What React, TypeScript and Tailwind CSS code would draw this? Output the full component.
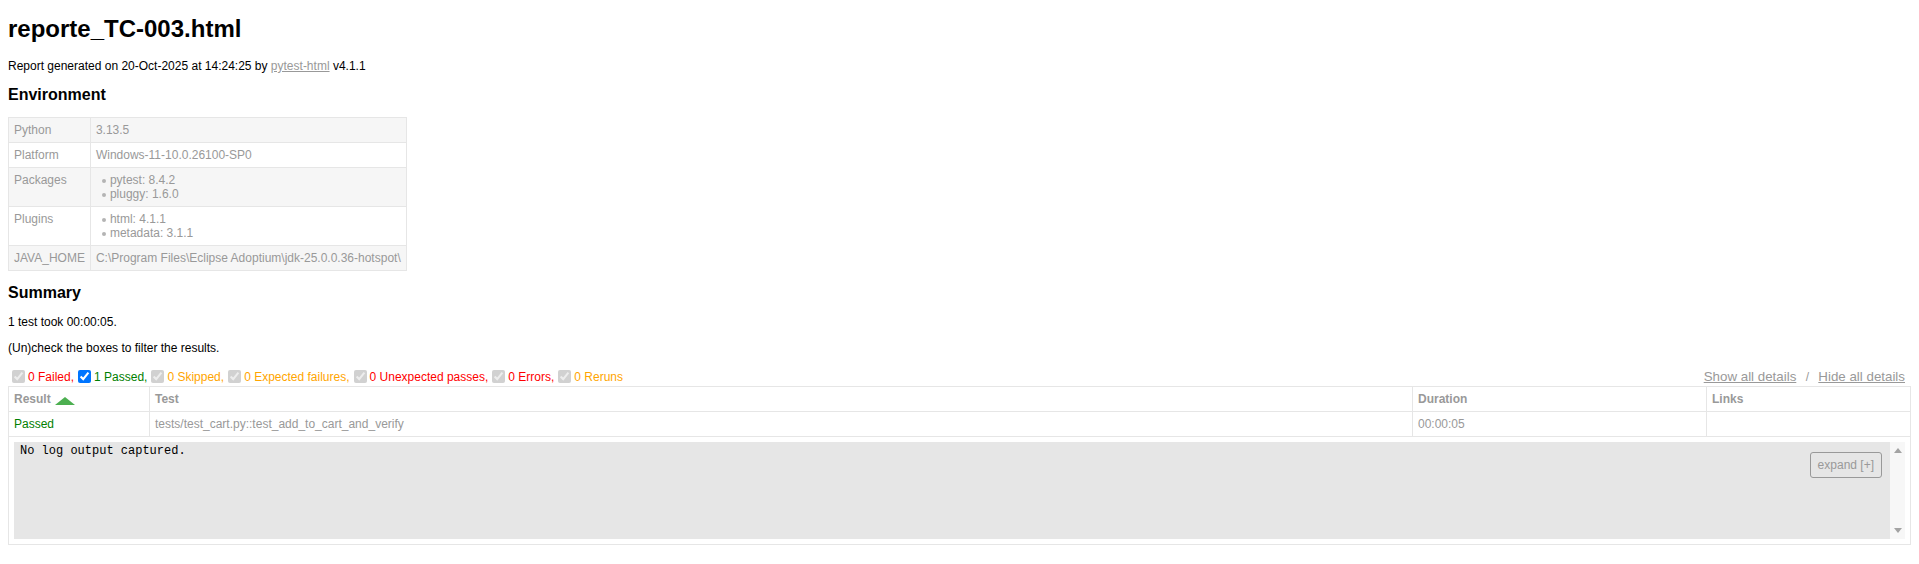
import React from "react";

const td = "border border-[#e6e6e6] p-[5px] align-top text-left";

function Bullets({ items }: { items: string[] }) {
  return (
    <ul>
      {items.map((t) => (
        <li key={t} className="flex items-center">
          <span className="ml-[6px] mr-[4px] mt-[2px] inline-block h-[4px] w-[4px] rounded-full bg-[#b4b4b4]" />
          <span>{t}</span>
        </li>
      ))}
    </ul>
  );
}

function Filter({ label, color, enabled }: { label: string; color: string; enabled?: boolean }) {
  return (
    <>
      <input
        type="checkbox"
        defaultChecked
        disabled={!enabled}
        className="m-[3px_3px_3px_4px] h-[13px] w-[13px]"
      />
      <span className={color}>{label}</span>
    </>
  );
}

export default function App() {
  return (
    <div className="min-h-[564px] bg-white px-[8px] pt-[15px] font-['Liberation_Sans',Arial,sans-serif] text-[12px] leading-[normal] text-[#999]">
      <h1 className="mb-[16px] text-[24px] font-bold text-black">reporte_TC-003.html</h1>
      <p className="mb-[13px] text-black">
        Report generated on 20-Oct-2025 at 14:24:25 by{" "}
        <a href="#" className="text-[#999] underline">
          pytest-html
        </a>{" "}
        v4.1.1
      </p>
      <h2 className="mb-[13px] text-[16px] font-bold text-black">Environment</h2>
      <table className="mb-[13px] border-collapse">
        <tbody>
          <tr className="bg-[#f6f6f6]">
            <td className={td}>Python</td>
            <td className={td}>3.13.5</td>
          </tr>
          <tr>
            <td className={td}>Platform</td>
            <td className={td}>Windows-11-10.0.26100-SP0</td>
          </tr>
          <tr className="bg-[#f6f6f6]">
            <td className={td}>Packages</td>
            <td className={td}>
              <Bullets items={["pytest: 8.4.2", "pluggy: 1.6.0"]} />
            </td>
          </tr>
          <tr>
            <td className={td}>Plugins</td>
            <td className={td}>
              <Bullets items={["html: 4.1.1", "metadata: 3.1.1"]} />
            </td>
          </tr>
          <tr className="bg-[#f6f6f6]">
            <td className={td}>JAVA_HOME</td>
            <td className={td}>C:\Program Files\Eclipse Adoptium\jdk-25.0.0.36-hotspot\</td>
          </tr>
        </tbody>
      </table>
      <h2 className="mb-[13px] text-[16px] font-bold text-black">Summary</h2>
      <p className="mb-[12px] text-black">1 test took 00:00:05.</p>
      <p className="mb-[12px] text-black">(Un)check the boxes to filter the results.</p>
      <div className="flex items-center justify-between">
        <div className="flex items-center">
          <Filter label="0 Failed," color="text-[red]" />
          <Filter label="1 Passed," color="text-[green]" enabled />
          <Filter label="0 Skipped," color="text-[orange]" />
          <Filter label="0 Expected failures," color="text-[orange]" />
          <Filter label="0 Unexpected passes," color="text-[red]" />
          <Filter label="0 Errors," color="text-[red]" />
          <Filter label="0 Reruns" color="text-[orange]" />
        </div>
        <div className="flex items-center">
          <button className="px-[6px] py-[1px] text-[13.333px] text-[#999] underline">Show all details</button>
          <span>&nbsp;/&nbsp;</span>
          <button className="px-[6px] py-[1px] text-[13.333px] text-[#999] underline">Hide all details</button>
        </div>
      </div>
      <table className="w-full table-fixed border-collapse border border-[#e6e6e6] text-[#999]">
        <colgroup>
          <col className="w-[141px]" />
          <col className="w-[1263px]" />
          <col className="w-[294px]" />
          <col />
        </colgroup>
        <thead>
          <tr>
            <th className={td + " font-bold"}>
              <div className="flex items-center">
                <span>Result</span>
                <span className="ml-[4px] mt-[3px] inline-block h-0 w-0 border-x-[10px] border-b-[8px] border-x-transparent border-b-[#4caf50]" />
              </div>
            </th>
            <th className={td + " font-bold"}>Test</th>
            <th className={td + " font-bold"}>Duration</th>
            <th className={td + " font-bold"}>Links</th>
          </tr>
        </thead>
        <tbody>
          <tr>
            <td className={td + " text-[green]"}>Passed</td>
            <td className={td}>tests/test_cart.py::test_add_to_cart_and_verify</td>
            <td className={td}>00:00:05</td>
            <td className={td}></td>
          </tr>
          <tr>
            <td colSpan={4} className={td}>
              <div className="flex h-[97px]">
                <div className="relative flex-1 bg-[#e6e6e6]">
                  <div className="pl-[6px] pt-[2px] font-['Liberation_Mono','Courier_New',monospace] text-[12px] text-black">
                    No log output captured.
                  </div>
                  <div className="absolute right-[8px] top-[10px] rounded-[3px] border border-[#999] px-[7px] py-[5px] text-[#999]">
                    expand [+]
                  </div>
                </div>
                <div className="flex w-[15px] flex-col items-center justify-between bg-[#f7f7f7] py-[6px]">
                  <span className="inline-block h-0 w-0 border-x-[4px] border-b-[5px] border-x-transparent border-b-[#a3a3a3]" />
                  <span className="inline-block h-0 w-0 border-x-[4px] border-t-[5px] border-x-transparent border-t-[#a3a3a3]" />
                </div>
              </div>
            </td>
          </tr>
        </tbody>
      </table>
    </div>
  );
}
